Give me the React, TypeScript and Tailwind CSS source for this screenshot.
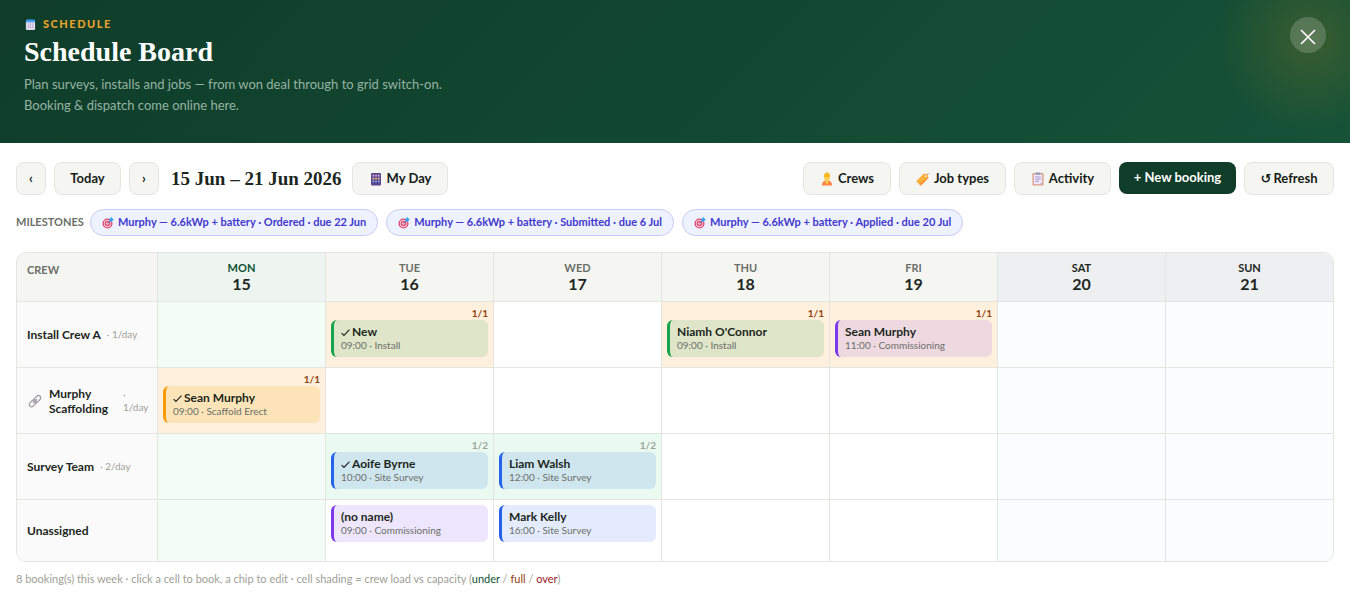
import React from 'react';
import clsx from 'clsx';

type ChipTone = 'install' | 'scaffold' | 'survey' | 'commissioning';
type Load = 'under' | 'full';

interface Booking {
    name: string;
    time: string;
    job: string;
    tone: ChipTone;
    done?: boolean;
    load?: string;
    state?: Load;
}

interface Crew {
    name: string;
    capacity?: string;
    linked?: boolean;
    bookings: Record<number, Booking>;
}

const days = [
    { label: 'Mon', date: 15 },
    { label: 'Tue', date: 16 },
    { label: 'Wed', date: 17 },
    { label: 'Thu', date: 18 },
    { label: 'Fri', date: 19 },
    { label: 'Sat', date: 20 },
    { label: 'Sun', date: 21 },
];

const crews: Crew[] = [
    {
        name: 'Install Crew A',
        capacity: '1/day',
        bookings: {
            16: { name: 'New', time: '09:00', job: 'Install', tone: 'install', done: true, load: '1/1', state: 'full' },
            18: { name: "Niamh O'Connor", time: '09:00', job: 'Install', tone: 'install', load: '1/1', state: 'full' },
            19: { name: 'Sean Murphy', time: '11:00', job: 'Commissioning', tone: 'commissioning', load: '1/1', state: 'full' },
        },
    },
    {
        name: 'Murphy Scaffolding',
        capacity: '1/day',
        linked: true,
        bookings: {
            15: { name: 'Sean Murphy', time: '09:00', job: 'Scaffold Erect', tone: 'scaffold', done: true, load: '1/1', state: 'full' },
        },
    },
    {
        name: 'Survey Team',
        capacity: '2/day',
        bookings: {
            16: { name: 'Aoife Byrne', time: '10:00', job: 'Site Survey', tone: 'survey', done: true, load: '1/2', state: 'under' },
            17: { name: 'Liam Walsh', time: '12:00', job: 'Site Survey', tone: 'survey', load: '1/2', state: 'under' },
        },
    },
    {
        name: 'Unassigned',
        bookings: {
            16: { name: '(no name)', time: '09:00', job: 'Commissioning', tone: 'commissioning' },
            17: { name: 'Mark Kelly', time: '16:00', job: 'Site Survey', tone: 'survey' },
        },
    },
];

const milestones = [
    'Murphy — 6.6kWp + battery · Ordered · due 22 Jun',
    'Murphy — 6.6kWp + battery · Submitted · due 6 Jul',
    'Murphy — 6.6kWp + battery · Applied · due 20 Jul',
];

const chipTones: Record<ChipTone, string> = {
    install: 'border-[#16a34a] bg-[#16a34a]/14',
    scaffold: 'border-[#f59e0b] bg-[#f5b00b]/18',
    survey: 'border-[#2563eb] bg-[#2563eb]/13',
    commissioning: 'border-[#7c3aed] bg-[#7c3aed]/13',
};

const App: React.FC = () => (
    <div className="font-[Lato,'Open_Sans',sans-serif] text-[#1c2620]">
        <Hero />
        <main className="px-4 pt-[19px]">
            <Toolbar />
            <Milestones />
            <Board />
            <p className="mt-[7px] text-[11px] leading-5 text-[#a09f98]">
                8 booking(s) this week · click a cell to book, a chip to edit · cell shading = crew load vs capacity (
                <span className="text-[#0f5132]">under</span> / <span className="text-[#92400e]">full</span> / <span className="text-[#991b1b]">over</span>)
            </p>
        </main>
    </div>
);

const Hero: React.FC = () => (
    <header className="relative h-[143px] overflow-hidden bg-linear-135 from-[#0f3d2a] to-[#155238] px-6 pt-4">
        <div className="absolute -top-[60px] -right-[60px] size-[200px] bg-[radial-gradient(circle,rgba(245,158,11,0.16),transparent_66%)]" />
        <div className="flex h-4 items-center gap-1.5 text-[11px] font-black tracking-[1.5px] text-[#e9a12c]">
            <CalendarIcon />
            SCHEDULE
        </div>
        <h1 className="mt-1 font-['Liberation_Serif',serif] text-[28px] leading-8 font-bold text-white">Schedule Board</h1>
        <p className="mt-1.5 max-w-[440px] text-[13px] leading-[21px] text-[#95b3a3]">
            Plan surveys, installs and jobs — from won deal through to grid switch-on. Booking &amp; dispatch come online here.
        </p>
        <button aria-label="Close" className="absolute top-[17px] right-6 flex size-9 items-center justify-center rounded-full bg-white/18 text-white">
            <svg viewBox="0 0 16 16" className="mt-1 size-4" stroke="currentColor" strokeWidth="1.7" strokeLinecap="round">
                <path d="M1.5 1.5 14.5 14.5M14.5 1.5 1.5 14.5" />
            </svg>
        </button>
    </header>
);

const ToolButton: React.FC<{ className?: string; label?: string; children: React.ReactNode }> = ({ className, label, children }) => (
    <button
        aria-label={label}
        className={clsx('flex h-[33px] items-center justify-center rounded-lg border border-[#e5e5e0] bg-[#f5f5f2] text-[13px] font-bold whitespace-nowrap text-[#161c18]', className)}
    >
        {children}
    </button>
);

const Toolbar: React.FC = () => (
    <div className="flex flex-wrap items-center gap-2">
        <ToolButton label="Previous week" className="w-[30px]">‹</ToolButton>
        <ToolButton className="w-[67px]">Today</ToolButton>
        <ToolButton label="Next week" className="w-[30px]">›</ToolButton>
        <h2 className="w-[177px] pl-1 font-['Liberation_Serif',serif] text-[19px] leading-6 font-bold whitespace-nowrap">15 Jun – 21 Jun 2026</h2>
        <ToolButton className="w-24 gap-1"><AbacusIcon />My Day</ToolButton>
        <div className="ml-auto flex gap-2">
            <ToolButton className="w-[88px] gap-1"><WorkerIcon />Crews</ToolButton>
            <ToolButton className="w-[107px] gap-1"><TagIcon />Job types</ToolButton>
            <ToolButton className="w-[97px] gap-1"><ClipboardIcon />Activity</ToolButton>
            <button className="h-8 w-[117px] rounded-lg bg-[#0f3d2a] text-[13px] font-bold whitespace-nowrap text-white">+ New booking</button>
            <ToolButton className="w-[90px] gap-0.5">
                <span className="font-['DejaVu_Sans',sans-serif]">↺</span>
                Refresh
            </ToolButton>
        </div>
    </div>
);

const Milestones: React.FC = () => (
    <div className="mt-3.5 flex flex-wrap items-center gap-2">
        <span className="w-[66px] text-[11px] font-bold text-[#6b6f69]">MILESTONES</span>
        {milestones.map((text) => (
            <button key={text} className="flex h-[27px] items-center gap-1 rounded-full border border-[#c7caf8] bg-[#eef2ff] px-[11px] text-[11px] font-bold whitespace-nowrap text-[#4338ca]">
                <TargetIcon />
                {text}
            </button>
        ))}
    </div>
);

const Board: React.FC = () => (
    <div className="mt-4 overflow-hidden rounded-[10px] border border-[#e3e5e1]">
        <table className="w-full table-fixed border-separate border-spacing-0">
            <thead>
                <tr className="h-12">
                    <th className="w-[140px] bg-[#f5f5f2] px-2.5 pt-2.5 text-left align-top text-[11px] leading-3.5 font-bold text-[#6b6f69]">CREW</th>
                    {days.map((day) => (
                        <th
                            key={day.date}
                            className={clsx(
                                'border-l border-[#e3e5e1] p-0 text-center',
                                day.label === 'Mon' && 'bg-[#eef5f0] text-[#0f5132]',
                                day.date >= 20 && 'bg-[#eeeff0]',
                                day.date > 15 && day.date < 20 && 'bg-[#f5f5f2] text-[#6b6f69]',
                            )}
                        >
                            <div className="text-[11px] leading-3.5 font-bold uppercase">{day.label}</div>
                            <div className="text-base leading-[18px] font-bold text-[#1c2620]">{day.date}</div>
                        </th>
                    ))}
                </tr>
            </thead>
            <tbody>
                {crews.map((crew) => (
                    <tr key={crew.name} className={crew.capacity ? 'h-[66px]' : 'h-[62px]'}>
                        <th scope="row" className="border-t border-[#e3e5e1] bg-[#fafafa] px-2.5 py-0 text-left">
                            <CrewLabel crew={crew} />
                        </th>
                        {days.map((day) => (
                            <DayCell key={day.date} date={day.date} booking={crew.bookings[day.date]} />
                        ))}
                    </tr>
                ))}
            </tbody>
        </table>
    </div>
);

const CrewLabel: React.FC<{ crew: Crew }> = ({ crew }) => (
    <div className="flex items-center gap-1.5 text-[12px] leading-[15px]">
        {crew.linked && <LinkIcon />}
        <span className={clsx('font-bold', crew.linked && 'flex-1')}>{crew.name}</span>
        {crew.capacity && (
            <span className={clsx('text-[10px] leading-[13px] font-normal text-[#a09f98]', crew.linked && 'w-6')}>· {crew.capacity}</span>
        )}
    </div>
);

const DayCell: React.FC<{ date: number; booking?: Booking }> = ({ date, booking }) => {
    let shade = 'bg-white';
    if (date === 15) shade = 'bg-[#f4fcf7]';
    if (date >= 20) shade = 'bg-[#fbfcfd]';
    if (booking?.state === 'full') shade = 'bg-[#fff0de]';
    if (booking?.state === 'under') shade = 'bg-[#eafaf0]';

    return (
        <td className={clsx('border-t border-l border-[#e3e5e1] p-[5px] align-top', shade)}>
            {booking?.load && (
                <div className={clsx('h-[13px] text-right text-[10px] leading-3 font-bold', booking.state === 'full' ? 'text-[#92400e]' : 'text-[#9aa39c]')}>
                    {booking.load}
                </div>
            )}
            {booking && (
                <button className={clsx('block h-[37px] w-full rounded-md border-l-3 px-[7px] text-left', chipTones[booking.tone])}>
                    <span className="flex items-center gap-0.5 text-[12px] leading-3.5 font-bold">
                        {booking.done && <CheckIcon />}
                        {booking.name}
                    </span>
                    <span className="block text-[10px] leading-[13px] text-[#6b6f69]">{booking.time} · {booking.job}</span>
                </button>
            )}
        </td>
    );
};

const CheckIcon: React.FC = () => (
    <svg viewBox="0 0 10 10" className="size-[9px] shrink-0" fill="none" stroke="currentColor" strokeWidth="1.3">
        <path d="M.7 5.6 3.3 8.3 9.4 1.8" />
    </svg>
);

const CalendarIcon: React.FC = () => (
    <svg viewBox="0 0 12 12" className="mx-px size-[11px]">
        <path d="M1 2.5h10V11a1 1 0 0 1-1 1H2a1 1 0 0 1-1-1z" fill="#e4def2" />
        <path d="M1 3.6V2a1.5 1.5 0 0 1 1.5-1.5h7A1.5 1.5 0 0 1 11 2v1.6z" fill="#3f9df0" />
        <path d="M3 5.4h1.3M5.3 5.4h1.4M7.7 5.4H9M3 7.4h1.3M5.3 7.4h1.4M7.7 7.4H9M3 9.4h1.3M5.3 9.4h1.4M7.7 9.4H9" stroke="#8d83b5" strokeWidth=".8" />
    </svg>
);

const AbacusIcon: React.FC = () => (
    <svg viewBox="0 0 14 14" className="size-3.5">
        <rect x="2" y="1" width="10" height="12.5" rx="1" fill="#5b4694" />
        <path d="M3.5 3.7h1.7M6.2 3.7h1.7M8.9 3.7h1.7" stroke="#e9b4d2" strokeWidth="1.7" />
        <path d="M3.5 6.6h1.7M6.2 6.6h1.7M8.9 6.6h1.7" stroke="#f4c565" strokeWidth="1.7" />
        <path d="M3.5 9.5h1.7M6.2 9.5h1.7M8.9 9.5h1.7" stroke="#83b6f2" strokeWidth="1.7" />
    </svg>
);

const WorkerIcon: React.FC = () => (
    <svg viewBox="0 0 14 14" className="size-3.5">
        <path d="M2 13.5c0-3.500 1.600-5 5-5s5 1.500 5 5z" fill="#fb8140" />
        <path d="M5.500 7.500h3v3L7 13l-1.500-2.500z" fill="#ffc94a" />
        <circle cx="7" cy="6" r="2.800" fill="#ffcd55" />
        <path d="M3.800 5C3.900 2 5 .5 7 .5S10.100 2 10.200 5z" fill="#f8b81d" />
    </svg>
);

const TagIcon: React.FC = () => (
    <svg viewBox="0 0 14 14" className="size-3.5">
        <path d="M.9 8.400 7.600 1.700l4.200.2.500 4.200-6.600 6.600a1.300 1.300 0 0 1-1.900 0L.9 10.100a1.200 1.200 0 0 1 0-1.700z" fill="#fbb03b" />
        <path d="m3.200 12.200.6.500a1.300 1.300 0 0 0 1.900 0l6.600-6.600-.1-1z" fill="#f28b30" />
        <circle cx="10" cy="3.900" r=".9" fill="#fff" />
        <path d="M10 3.900c.4-2.200 1.800-2.900 3.300-2.100" fill="none" stroke="#c3a9a4" strokeWidth=".8" />
    </svg>
);

const ClipboardIcon: React.FC = () => (
    <svg viewBox="0 0 14 14" className="size-3.5">
        <rect x="1.5" y="1" width="11" height="12.5" rx="1.2" fill="#d99a7c" />
        <rect x="2.8" y="2.3" width="8.4" height="10" fill="#f0e9fb" />
        <rect x="4.5" y=".4" width="5" height="2.4" rx=".8" fill="#9b93b3" />
        <path d="M4.2 5h5.6M4.2 7.2h5.6M4.2 9.4h3.6" stroke="#8d83c2" strokeWidth=".8" />
        <path d="M11.2 9.7v2.6H8.600z" fill="#c3b6dc" />
    </svg>
);

const TargetIcon: React.FC = () => (
    <svg viewBox="0 0 12 12" className="size-3">
        <circle cx="5.5" cy="6.5" r="5" fill="#e0426b" />
        <circle cx="5.5" cy="6.5" r="3.7" fill="#f3dfee" />
        <circle cx="5.5" cy="6.5" r="2.8" fill="#e0426b" />
        <circle cx="5.5" cy="6.5" r="1.3" fill="#f3dfee" />
        <path d="m5.5 6.5 3-3" stroke="#5c5f80" strokeWidth=".9" />
        <path d="m7.200 4.800.3-2.800L9.800 0l.5 1.600 1.600.5-2 2.400z" fill="#38a3ea" />
    </svg>
);

const LinkIcon: React.FC = () => (
    <svg viewBox="0 0 16 16" className="size-4 shrink-0" fill="none" stroke="#9e9aa5" strokeWidth="1.2">
        <rect x="1.8" y="8" width="8" height="4.6" rx="2.3" transform="rotate(-45 5.8 10.3)" />
        <rect x="6.2" y="3.8" width="8" height="4.6" rx="2.3" transform="rotate(-45 10.2 6.1)" />
        <path d="m6 10.200 4-4" />
    </svg>
);

export default App;
